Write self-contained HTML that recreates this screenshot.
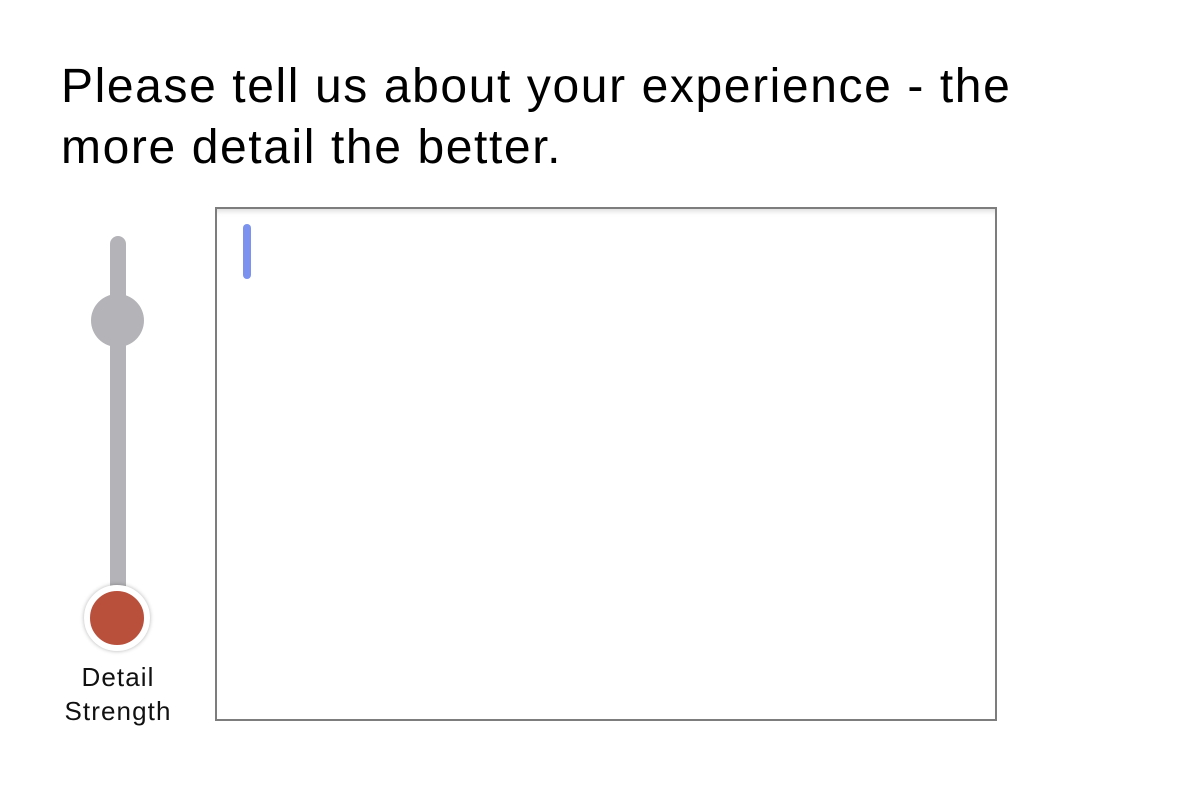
<!DOCTYPE html>
<html><head><meta charset="utf-8"><style>
html,body{margin:0;padding:0;background:#fff;width:1200px;height:804px;overflow:hidden;position:relative;font-family:"Liberation Sans",Helvetica,Arial,sans-serif;}
h1{position:absolute;left:61px;top:56px;margin:0;font-weight:normal;font-size:48px;line-height:61px;color:#000;letter-spacing:1.6px;white-space:nowrap;}
.track{position:absolute;left:110px;top:236px;width:16px;height:360px;background:#b4b4b8;border-radius:8px;}
.knob{position:absolute;left:91px;top:294px;width:53px;height:53px;border-radius:50%;background:#b4b4b8;}
.red{position:absolute;left:84px;top:585px;width:54px;height:54px;border-radius:50%;background:#b9503c;border:6px solid #fff;box-shadow:0 0 4px rgba(0,0,0,0.3);}
.lbl{position:absolute;left:38px;top:660px;width:160px;text-align:center;font-size:26px;line-height:34px;color:#111;letter-spacing:1.1px;}
.box{position:absolute;left:215px;top:207px;width:778px;height:510px;border:2px solid #7d7d7d;box-shadow:inset 0 6px 6px -4px rgba(0,0,0,0.15);background:#fff;}
.cur{position:absolute;left:243px;top:224px;width:8px;height:55px;border-radius:4px;background:#7b93ee;}
</style></head><body>
<h1>Please tell us about your experience - the<br>more detail the better.</h1>
<div class="track"></div>
<div class="knob"></div>
<div class="red"></div>
<div class="lbl">Detail<br>Strength</div>
<div class="box"></div>
<div class="cur"></div>
</body></html>
